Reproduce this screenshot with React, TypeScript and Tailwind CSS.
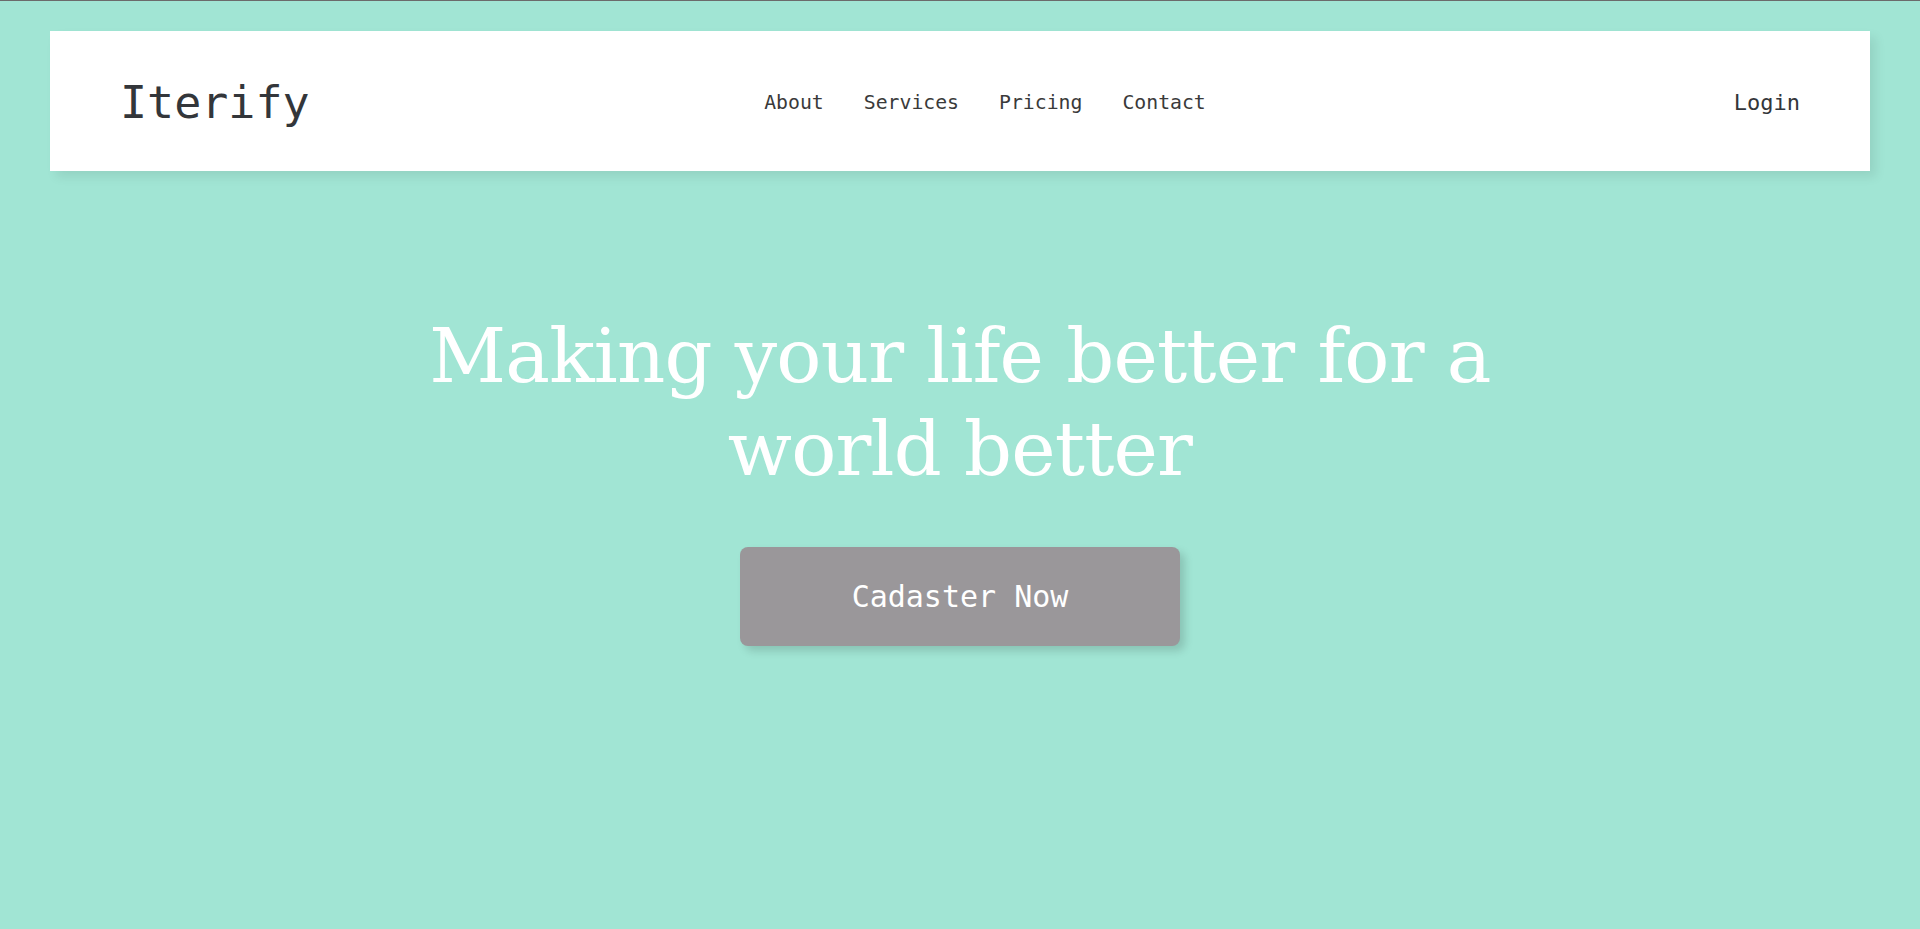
export default function App() {
  const links = ["About", "Services", "Pricing", "Contact"]

  return (
    <div className="min-h-screen w-full bg-[#a1e5d4] border-t border-[#6b6b6b] font-['DejaVu_Sans_Mono',monospace]">
      {/* top bar */}
      <header className="mx-[50px] mt-[30px] h-[140px] bg-white shadow-[6px_6px_10px_rgba(0,0,0,0.08)] grid grid-cols-3 items-center px-[70px]">
        <a className="justify-self-start mt-[2px] text-[45px] text-[#33363a] leading-none">Iterify</a>
        <nav className="justify-self-center flex items-center gap-[40px] pl-[50px] mt-[4px] text-[19.8px] text-[#3a3a3a]">
          {links.map((l) => (
            <a key={l}>{l}</a>
          ))}
        </nav>
        <a className="justify-self-end mt-[2px] text-[22px] text-[#33363a]">Login</a>
      </header>

      {/* hero */}
      <main className="flex flex-col items-center pt-[139px]">
        <h1 className="max-w-[1100px] text-center font-['DejaVu_Serif',serif] text-[75px] leading-[93px] tracking-[-0.8px] text-white">
          Making your life better for a world better
        </h1>
        <button className="mt-[51px] w-[440px] h-[99px] rounded-[8px] bg-[#9a979a] text-white text-[30px] shadow-[5px_5px_8px_rgba(0,0,0,0.15)]">
          Cadaster Now
        </button>
      </main>
    </div>
  )
}
